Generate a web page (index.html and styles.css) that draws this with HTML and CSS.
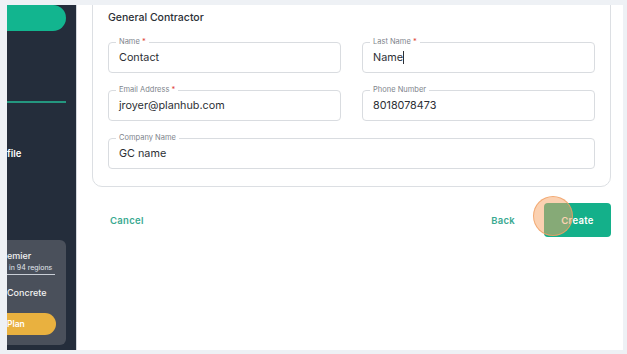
FILE: index.html
```html
<!DOCTYPE html>
<html lang="en">
<head>
    <meta charset="UTF-8">
    <meta name="viewport" content="width=device-width, initial-scale=1.0">
    <title>New Project - General Contractor</title>
    <link rel="stylesheet" href="styles.css">
</head>
<body>

    <div class="app">
        <aside class="sidebar">
            <div class="side-btn"></div>
            <div class="side-divider"></div>
            <div class="side-link">file</div>

            <div class="promo">
                <div class="promo-title">emier</div>
                <div class="promo-sub">in 94 regions</div>
                <div class="promo-trade">Concrete</div>
                <div class="promo-btn">Plan</div>
            </div>
        </aside>

        <main class="main">
            <div class="card">
                <h2 class="card-title">General Contractor</h2>

                <div class="form-grid">
                    <div class="field">
                        <span class="field-label">Name <em>*</em></span>
                        <span class="field-value">Contact</span>
                    </div>
                    <div class="field">
                        <span class="field-label">Last Name <em>*</em></span>
                        <span class="field-value caret">Name</span>
                    </div>
                    <div class="field">
                        <span class="field-label">Email Address <em>*</em></span>
                        <span class="field-value">jroyer@planhub.com</span>
                    </div>
                    <div class="field">
                        <span class="field-label">Phone Number</span>
                        <span class="field-value">8018078473</span>
                    </div>
                    <div class="field wide">
                        <span class="field-label">Company Name</span>
                        <span class="field-value">GC name</span>
                    </div>
                </div>
            </div>

            <div class="actions">
                <button class="link-btn">Cancel</button>
                <button class="link-btn push">Back</button>
                <button class="create-btn">
                    <span class="click-ring"></span>
                    Create
                </button>
            </div>
        </main>
    </div>

</body>
</html>
```

FILE: styles.css
```css
body {
    margin: 0;
    padding: 0;
    background-color: #eef1f5;
    font-family: Inter, "Noto Sans", sans-serif;
    color: #2b2f36;
}

.app {
    display: flex;
    height: 354px;
    padding: 5px 4px 4px 7px;
    box-sizing: border-box;
}

/* sidebar */

.sidebar {
    width: 69px;
    flex-shrink: 0;
    background: #242d3b;
    overflow: hidden;
    display: flex;
    flex-direction: column;
    white-space: nowrap;
}

.side-btn {
    height: 26px;
    width: 59px;
    border-radius: 0 13px 13px 0;
    background: #12b58f;
}

.side-divider {
    height: 2px;
    width: 59px;
    margin-top: 70px;
    background: #24977f;
}

.side-link {
    margin-top: 44px;
    line-height: 14px;
    font-size: 9.5px;
    font-weight: 600;
    color: #fff;
}

.promo {
    margin-top: auto;
    margin-bottom: 5px;
    width: 59px;
    height: 105px;
    box-sizing: border-box;
    padding-top: 9px;
    background: #4a505b;
    border-radius: 0 6px 6px 0;
    color: #f2f2f2;
}

.promo-title {
    line-height: 14px;
    font-size: 9px;
    font-weight: 500;
}

.promo-sub {
    width: 46px;
    line-height: 10px;
    padding: 0 0 1px 2px;
    font-size: 7px;
    border-bottom: 1px solid #c9ced6;
    color: #e3e8ef;
}

.promo-trade {
    margin-top: 11px;
    line-height: 14px;
    font-size: 9px;
    font-weight: 500;
}

.promo-btn {
    margin-top: 13px;
    width: 49px;
    height: 22px;
    border-radius: 0 11px 11px 0;
    background: #e9b13f;
    display: flex;
    align-items: center;
    font-size: 8.5px;
    font-weight: 600;
    color: #fff;
}

/* main */

.main {
    flex: 1;
    background: #fff;
    border-left: 1px solid #d3d7dc;
    padding: 0 12px 0 15px;
    overflow: hidden;
}

.card {
    margin-top: -10px;
    padding: 14px 15px 17px;
    border: 1px solid #dcdfe3;
    border-radius: 10px;
}

.card-title {
    margin: 0 0 16px;
    line-height: 16px;
    font-size: 10.5px;
    font-weight: 500;
    color: #2b2f36;
}

.form-grid {
    display: grid;
    grid-template-columns: 1fr 1fr;
    column-gap: 21px;
    row-gap: 17px;
}

.field {
    position: relative;
    height: 31px;
    border: 1px solid #d9dce0;
    border-radius: 4px;
    box-sizing: border-box;
    display: flex;
    align-items: center;
    padding-left: 10px;
}

.field.wide {
    grid-column: 1 / 3;
}

.field-label {
    position: absolute;
    top: -6px;
    left: 7px;
    padding: 0 3px;
    background: #fff;
    line-height: 10px;
    font-size: 7.5px;
    color: #80858c;
}

.field-label em {
    font-style: normal;
    color: #e0433b;
}

.field-value {
    font-size: 10.8px;
    color: #2d3035;
}

.caret {
    border-right: 1px solid #2d3035;
    line-height: 13px;
}

/* actions */

.actions {
    display: flex;
    align-items: center;
    margin-top: 16px;
    height: 34px;
}

.link-btn {
    background: none;
    border: none;
    padding: 0 18px;
    font-family: inherit;
    font-size: 9.5px;
    font-weight: 600;
    letter-spacing: 0.3px;
    color: #3aa991;
    cursor: pointer;
}

.push {
    margin-left: auto;
    margin-right: 11px;
}

.create-btn {
    position: relative;
    width: 67px;
    height: 34px;
    border: none;
    border-radius: 4px;
    background: #14b08a;
    font-family: inherit;
    font-size: 9.5px;
    font-weight: 600;
    letter-spacing: 0.3px;
    color: #fff;
    cursor: pointer;
}

.click-ring {
    position: absolute;
    left: -11px;
    top: -7px;
    width: 38px;
    height: 38px;
    border-radius: 50%;
    background: rgba(247, 164, 100, 0.5);
    border: 1.5px solid rgba(240, 160, 100, 0.8);
}
```
